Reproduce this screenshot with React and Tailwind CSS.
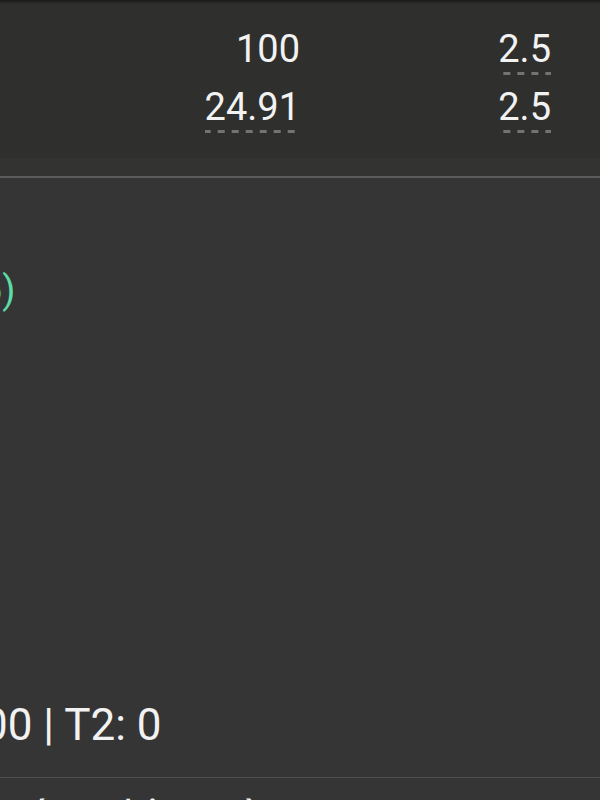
const dash =
  "inline-block pb-[4px] bg-[linear-gradient(to_right,#737373_50%,transparent_50%)] bg-[length:14px_3px] bg-repeat-x bg-bottom";

export default function App() {
  return (
    <div className="w-[600px] min-h-screen bg-[#353535] font-['Roboto',sans-serif] text-[#f2f2f2] overflow-hidden">
      <div className="h-[4px] bg-gradient-to-b from-[#1a1a1a] to-[#2f2f2d]" />
      <div className="bg-[#2f2f2d] pt-[23px] pb-[25px]">
        <div className="grid grid-cols-[300px_251px] gap-y-[10px] text-[38px] leading-[44px]">
          <div className="text-right"><span className="inline-block pb-[4px]">100</span></div>
          <div className="text-right"><span className={dash}>2.5</span></div>
          <div className="text-right"><span className={dash}>24.91</span></div>
          <div className="text-right"><span className={dash}>2.5</span></div>
        </div>
      </div>
      <div className="h-[18px] bg-[#333332]" />
      <div className="h-[2px] bg-[#5c5c5c]" />
      <div className="pt-[90px] text-[38px] leading-[44px] text-[#5bdca6]">
        <span className="inline-block ml-[-19px]">6)</span>
      </div>
      <div className="pt-[388px] text-[44px] leading-[50px]">
        <span className="inline-block ml-[-17px] whitespace-pre">00 | T2: 0</span>
      </div>
      <div className="mt-[27px] h-px bg-[#505050]" />
      <div className="pt-[15px] flex text-[38px] leading-[44px] whitespace-pre">
        <span className="ml-[8px]">các</span>
        <span className="ml-[55px]">liên</span>
        <span className="ml-[38px]">cờ</span>
      </div>
    </div>
  );
}
